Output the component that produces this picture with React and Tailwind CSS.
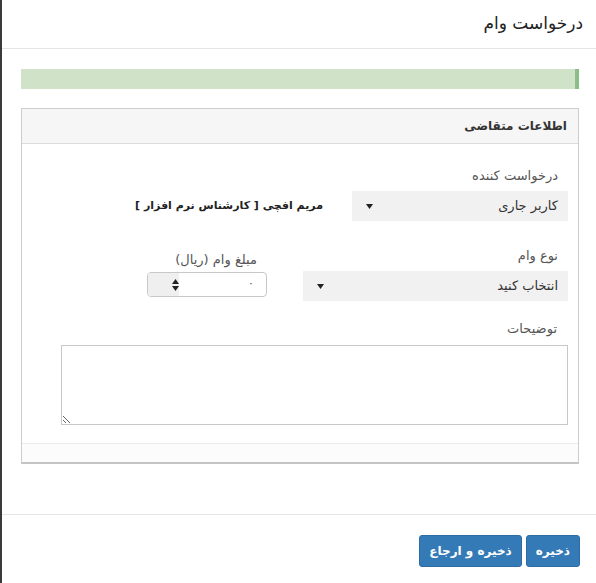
import { useState } from 'react'

const font = { fontFamily: '"DejaVu Sans", "Noto Sans", sans-serif' }

function Caret() {
  return (
    <svg width="7" height="5" viewBox="0 0 7 5" className="shrink-0">
      <path d="M0 0h7L3.5 5z" fill="#222" />
    </svg>
  )
}

function Spinner() {
  return (
    <svg width="7" height="12" viewBox="0 0 7 12">
      <path d="M3.5 0L7 5H0z" fill="#222" />
      <path d="M0 7h7l-3.5 5z" fill="#222" />
    </svg>
  )
}

function Select({ value, width }) {
  return (
    <div className={`${width} h-[30px] bg-[#f1f1f1] flex items-center justify-between pr-[10px] pl-[14px] text-[13px] text-[#333]`}>
      <span>{value}</span>
      <Caret />
    </div>
  )
}

export default function App() {
  const [note, setNote] = useState('')

  return (
    <div dir="rtl" style={font} className="h-[583px] bg-white border-l-2 border-[#3a3a3a] flex flex-col text-[#333]">
      {/* سربرگ */}
      <div className="h-[49px] border-b border-[#e5e5e5] flex items-center pr-[13px]">
        <h4 className="text-[17px] font-normal text-[#222]">درخواست وام</h4>
      </div>

      <div className="pt-[20px] pr-[17px] pl-[19px]">
        <div className="h-[20px] bg-[#d0e2c7] border-r-4 border-[#8bbf88]" />

        <div className="mt-[19px] border border-[#cdcdcd] border-b-2 border-b-[#c4c4c4] bg-white">
          <div className="h-[35px] bg-[#f6f6f6] border-b border-[#dcdcdc] flex items-center pr-[11px] text-[12px] font-bold text-[#333]">
            اطلاعات متقاضی
          </div>

          <div className="pt-[22px] pr-[10px] pb-[18px]">
            {/* ردیف اول */}
            <div className="flex items-end gap-[29px]">
              <div className="w-[216px]">
                <div className="h-5 mb-[5px] pr-[10px] text-[13px] text-[#555]">درخواست کننده</div>
                <Select value="کاربر جاری" width="w-[216px]" />
              </div>
              <div className="h-[30px] flex items-center text-[11px] font-bold text-[#222]">
                مریم افچی [ کارشناس نرم افزار ]
              </div>
            </div>

            {/* ردیف دوم */}
            <div className="flex items-end gap-[36px] mt-[25px]">
              <div className="w-[265px]">
                <div className="h-5 mb-[5px] pr-[10px] text-[13px] text-[#555]">نوع وام</div>
                <Select value="انتخاب کنید" width="w-[265px]" />
              </div>
              <div className="w-[120px] mb-[4px]">
                <div className="h-5 mb-[2px] pr-[10px] text-[13px] text-[#555]">مبلغ وام (ریال)</div>
                <div className="h-[25px] border border-[#c8c8c8] rounded-[4px] flex items-center justify-between overflow-hidden">
                  <span className="pr-[12px] text-[11px] text-[#555]">٠</span>
                  <div className="w-[31px] h-full bg-[#efefef] flex items-center pl-[6px]">
                    <Spinner />
                  </div>
                </div>
              </div>
            </div>

            {/* توضیحات */}
            <div className="mt-[18px]">
              <div className="h-5 mb-[6px] pr-[11px] text-[13px] text-[#555]">توضیحات</div>
              <textarea
                value={note}
                onChange={e => setNote(e.target.value)}
                className="block w-[507px] h-[80px] border border-[#c8c8c8] bg-white text-[13px] outline-none"
              />
            </div>
          </div>

          <div className="h-[19px] border-t border-[#ececec] bg-[#fcfcfc]" />
        </div>
      </div>

      <div className="mt-auto h-[69px] border-t border-[#e5e5e5] flex items-start pt-[20px] pr-[16px] gap-[4px]">
        <button className="h-[32px] px-[9px] bg-[#337ab7] border border-[#2e6da4] rounded-[3px] text-white text-[12px] font-bold">
          ذخیره
        </button>
        <button className="h-[32px] px-[9px] bg-[#337ab7] border border-[#2e6da4] rounded-[3px] text-white text-[12px] font-bold">
          ذخیره و ارجاع
        </button>
      </div>
    </div>
  )
}
